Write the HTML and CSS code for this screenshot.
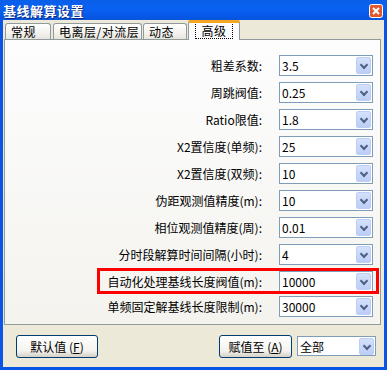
FILE: index.html
```html
<!DOCTYPE html>
<html lang="zh-CN">
<head>
    <meta charset="UTF-8">
    <title>基线解算设置</title>
    <link rel="stylesheet" href="styles.css">
</head>
<body>
    <div class="window">
        <div class="titlebar">
            <span class="title">基线解算设置</span>
            <span class="btn-close">
                <svg width="14" height="14" viewBox="0 0 14 14">
                    <rect x="0.5" y="0.5" width="13" height="13" rx="2" fill="#e2582f" stroke="#fff"/>
                    <path d="M4 4 L10 10 M10 4 L4 10" stroke="#fff" stroke-width="2"/>
                </svg>
            </span>
        </div>

        <div class="client">
            <div class="tabs">
                <div class="tab t1">常规</div>
                <div class="tab t2">电离层/对流层</div>
                <div class="tab t3">动态</div>
                <div class="tab active"><span class="focus">高级</span></div>
            </div>

            <div class="panel">
                <div class="row">
                    <label>粗差系数:</label>
                    <div class="combo"><span>3.5</span><i class="drop"></i></div>
                </div>
                <div class="row">
                    <label>周跳阀值:</label>
                    <div class="combo"><span>0.25</span><i class="drop"></i></div>
                </div>
                <div class="row">
                    <label>Ratio限值:</label>
                    <div class="combo"><span>1.8</span><i class="drop"></i></div>
                </div>
                <div class="row">
                    <label>X2置信度(单频):</label>
                    <div class="combo"><span>25</span><i class="drop"></i></div>
                </div>
                <div class="row">
                    <label>X2置信度(双频):</label>
                    <div class="combo"><span>10</span><i class="drop"></i></div>
                </div>
                <div class="row">
                    <label>伪距观测值精度(m):</label>
                    <div class="combo"><span>10</span><i class="drop"></i></div>
                </div>
                <div class="row">
                    <label>相位观测值精度(周):</label>
                    <div class="combo"><span>0.01</span><i class="drop"></i></div>
                </div>
                <div class="row">
                    <label>分时段解算时间间隔(小时):</label>
                    <div class="combo"><span>4</span><i class="drop"></i></div>
                </div>
                <div class="row marked">
                    <label>自动化处理基线长度阀值(m):</label>
                    <div class="combo"><span>10000</span><i class="drop"></i></div>
                </div>
                <div class="row last">
                    <label>单频固定解基线长度限制(m):</label>
                    <div class="combo"><span>30000</span><i class="drop"></i></div>
                </div>
            </div>

            <div class="footer">
                <button class="btn">默认值 (<u>F</u>)</button>
                <button class="btn btn-assign">赋值至 (<u>A</u>)</button>
                <div class="combo combo-all"><span>全部</span><i class="drop"></i></div>
            </div>
        </div>
    </div>
</body>
</html>
```

FILE: styles.css
```css
body {
    margin: 0;
    font-family: "Noto Sans CJK SC", "DejaVu Sans", sans-serif;
    font-size: 12px;
    color: #000;
}
.window {
    width: 387px;
    height: 370px;
    display: flex;
    flex-direction: column;
    background: #0a55e6;
    overflow: hidden;
}
.titlebar {
    height: 20px;
    flex-shrink: 0;
    display: flex;
    align-items: center;
    justify-content: space-between;
    padding: 0 4px 0 3px;
    background: linear-gradient(#0a5fe8, #0a62f2 40%, #0558e6 80%, #0a54dc);
}
.title {
    color: #fff;
    font-size: 13px;
    font-weight: bold;
    letter-spacing: 0.5px;
    text-shadow: 1px 1px 0 #0a2a80;
}
.btn-close {
    display: flex;
    margin-top: 2px;
}
.client {
    flex: 1;
    margin: 0 3px 3px 3px;
    background: #ece9d8;
    display: flex;
    flex-direction: column;
}

/* tabs */
.tabs {
    height: 19px;
    flex-shrink: 0;
    display: flex;
    align-items: flex-end;
    padding-left: 2px;
    position: relative;
    z-index: 1;
}
.tab {
    height: 15px;
    line-height: 15px;
    border: 1px solid #919b9c;
    border-bottom: none;
    border-radius: 3px 3px 0 0;
    background: linear-gradient(#fff, #f3f2ee 60%, #e6e4dc);
    padding-left: 5px;
    letter-spacing: 0.5px;
    white-space: nowrap;
    overflow: hidden;
    box-sizing: content-box;
}
.t1 { width: 39px; margin-right: 2px; }
.t2 { width: 82px; margin-right: 1px; }
.t3 { width: 37px; margin-right: 1px; }
.tab.active {
    width: 50px;
    height: 17px;
    padding: 0;
    margin-bottom: -1px;
    background: #fcfcfe;
    border-top: 3px solid #f5a623;
    border-radius: 2px 2px 0 0;
    display: flex;
    align-items: flex-start;
    justify-content: center;
}
.focus {
    padding: 0 5px;
    line-height: 15px;
    outline: 1px dotted #000;
}

/* panel */
.panel {
    height: 269px;
    flex-shrink: 0;
    margin: 0 3px 0 1px;
    border: 1px solid #919b9c;
    background: linear-gradient(#fdfdfe, #f4f3ee);
    padding-top: 15px;
    box-sizing: content-box;
    display: flex;
    flex-direction: column;
    gap: 6px;
}
.row {
    height: 21px;
    flex-shrink: 0;
    display: flex;
    justify-content: flex-end;
    align-items: center;
    gap: 17px;
    padding-right: 7px;
}
.row label {
    white-space: nowrap;
}
.row.last {
    margin-top: -2px;
}
.row.marked {
    position: relative;
}
.row.marked::after {
    content: "";
    position: absolute;
    left: 92px;
    right: 1px;
    top: -3px;
    bottom: -2px;
    border: 3px solid #f00;
}

/* combo box */
.combo {
    width: 89px;
    height: 19px;
    border: 1px solid #7f9db9;
    background: #fff;
    display: flex;
    align-items: center;
    justify-content: space-between;
    padding-left: 2px;
    padding-right: 1px;
    box-sizing: content-box;
}
.drop {
    width: 15px;
    height: 17px;
    border: 1px solid #bccdf6;
    border-radius: 2px;
    box-sizing: border-box;
    background: linear-gradient(#d5e1fb, #bccdf6);
    position: relative;
}
.drop::after {
    content: "";
    position: absolute;
    left: 4px;
    top: 4px;
    width: 4px;
    height: 4px;
    border-right: 2px solid #4d6185;
    border-bottom: 2px solid #4d6185;
    transform: rotate(45deg);
}

/* footer */
.footer {
    flex: 1;
    display: flex;
    align-items: flex-start;
    padding: 10px 8px 0 13px;
}
.btn {
    width: 82px;
    height: 23px;
    font-family: inherit;
    font-size: 12px;
    border: 1px solid #003c74;
    border-radius: 3px;
    background: linear-gradient(#fff, #f4f3ee 70%, #d6d0c5);
    padding: 0;
}
.btn-assign {
    width: 73px;
    margin-left: auto;
    margin-right: 5px;
}
.combo-all {
    width: 74px;
    height: 18px;
    margin-top: 1px;
}
```
